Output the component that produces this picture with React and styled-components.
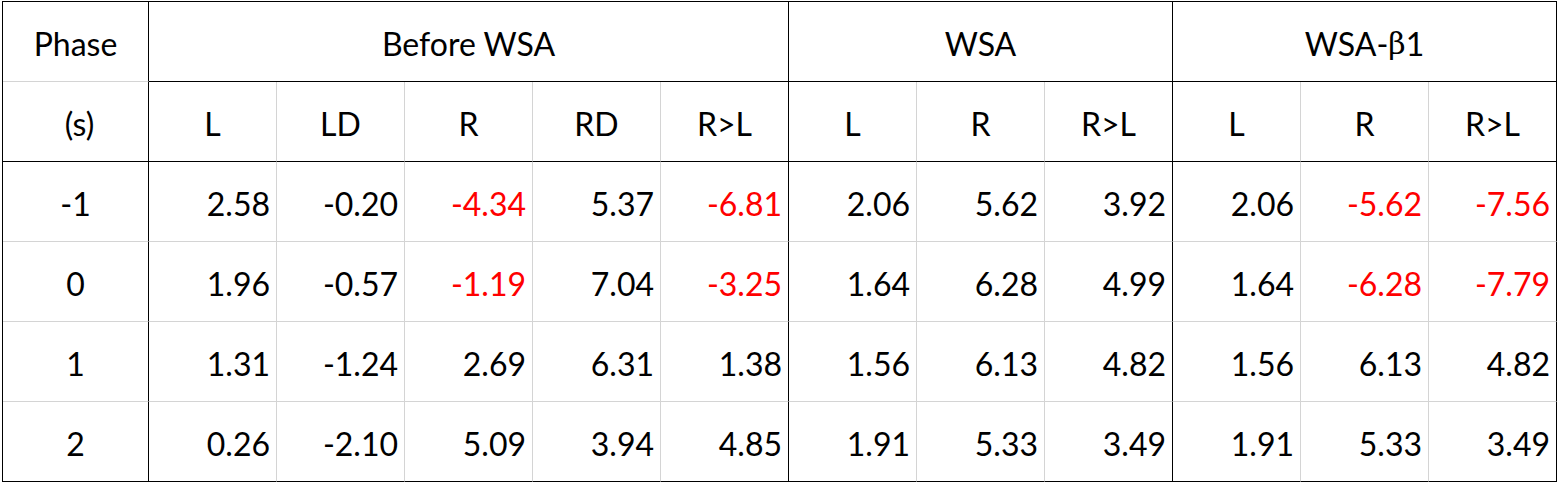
import React from "react";
import styled, { createGlobalStyle } from "styled-components";

const Global = createGlobalStyle`
  html, body { margin: 0; padding: 0; background: #ffffff; }
  body { font-family: Lato, "Open Sans", "DejaVu Sans", sans-serif; }
`;

const BLACK = "#000000";
const GRAY = "#d4d4d4";

const Page = styled.div`
  padding: 1px 0 0 2px;
  width: 1558px;
  height: 484px;
  box-sizing: border-box;
  overflow: hidden;
`;

const Grid = styled.div`
  display: grid;
  grid-template-columns: 146px repeat(11, 128px);
  grid-auto-rows: 80px;
  width: max-content;
  border-left: 1px solid ${BLACK};
  border-top: 1px solid ${BLACK};
`;

const Cell = styled.div`
  grid-column: span ${(p) => p.$span || 1};
  box-sizing: border-box;
  display: flex;
  align-items: center;
  justify-content: ${(p) => (p.$align === "right" ? "flex-end" : "center")};
  padding: 5px ${(p) => (p.$align === "right" ? "6px" : "0")} 0 ${(p) => p.$shift || 0}px;
  border-right: 1px solid ${(p) => (p.$rightDark ? BLACK : GRAY)};
  border-bottom: 1px solid ${(p) => (p.$bottomDark ? BLACK : GRAY)};
  font-size: 32px;
  line-height: 1;
  color: ${(p) => (p.$red ? "#ff0000" : "#000000")};
  white-space: nowrap;
`;

const Beta = styled.span`
  font-family: "DejaVu Serif", "Liberation Serif", serif;
  font-size: 30px;
`;

const groups = [
  { cols: ["L", "LD", "R", "RD", "R>L"] },
  { cols: ["L", "R", "R>L"] },
  { cols: ["L", "R", "R>L"] },
];

const rows = [
  { phase: "-1", vals: ["2.58", "-0.20", "-4.34", "5.37", "-6.81", "2.06", "5.62", "3.92", "2.06", "-5.62", "-7.56"], red: [2, 4, 9, 10] },
  { phase: "0", vals: ["1.96", "-0.57", "-1.19", "7.04", "-3.25", "1.64", "6.28", "4.99", "1.64", "-6.28", "-7.79"], red: [2, 4, 9, 10] },
  { phase: "1", vals: ["1.31", "-1.24", "2.69", "6.31", "1.38", "1.56", "6.13", "4.82", "1.56", "6.13", "4.82"], red: [] },
  { phase: "2", vals: ["0.26", "-2.10", "5.09", "3.94", "4.85", "1.91", "5.33", "3.49", "1.91", "5.33", "3.49"], red: [] },
];

const groupEnds = [4, 7, 10];

export default function App() {
  const subHeaders = groups.flatMap((g) => g.cols);
  return (
    <>
      <Global />
      <Page>
        <Grid>
          <Cell $rightDark>Phase</Cell>
          <Cell $span={5} $rightDark $bottomDark>Before WSA</Cell>
          <Cell $span={3} $rightDark $bottomDark>WSA</Cell>
          <Cell $span={3} $rightDark $bottomDark>
            WSA-<Beta>β</Beta>1
          </Cell>

          <Cell $rightDark $bottomDark $shift={8}>(s)</Cell>
          {subHeaders.map((h, i) => (
            <Cell key={"h" + i} $rightDark={groupEnds.includes(i)} $bottomDark>
              {h}
            </Cell>
          ))}

          {rows.map((r, ri) => {
            const last = ri === rows.length - 1;
            return (
              <React.Fragment key={r.phase}>
                <Cell $rightDark $bottomDark={last}>{r.phase}</Cell>
                {r.vals.map((v, i) => (
                  <Cell
                    key={i}
                    $align="right"
                    $rightDark={groupEnds.includes(i)}
                    $bottomDark={last}
                    $red={r.red.includes(i)}
                  >
                    {v}
                  </Cell>
                ))}
              </React.Fragment>
            );
          })}
        </Grid>
      </Page>
    </>
  );
}
